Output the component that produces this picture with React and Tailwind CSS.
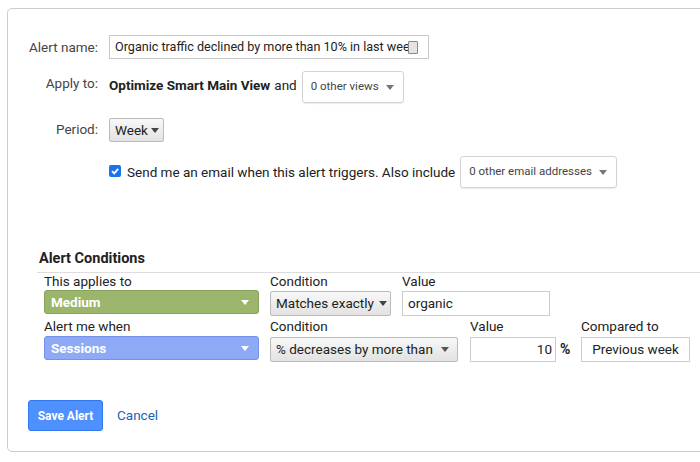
import React from "react";

function Caret({ color = "#555" }) {
  return (
    <svg width="8" height="5" viewBox="0 0 8 5" className="shrink-0">
      <path d="M0 0 L8 0 L4 5 Z" fill={color} />
    </svg>
  );
}

export default function App() {
  return (
    <div className="w-[700px] h-[462px] overflow-hidden bg-white font-['Roboto',_'Liberation_Sans',_sans-serif] text-[13.5px] text-[#222]">
      <div className="ml-[7px] mt-[8px] w-[720px] h-[444px] border border-[#ccc] rounded-[5px] pt-[26px] relative">
        {/* Alert name */}
        <div className="flex items-center">
          <div className="w-[90px] text-right text-[#444]">Alert name:</div>
          <div className="ml-[11px] w-[320px] h-[24px] border border-[#c8c8c8] flex items-center pl-[5px] relative overflow-hidden">
            <span className="whitespace-nowrap text-[12.6px]">Organic traffic declined by more than 10% in last week</span>
            <span className="absolute right-[10px] top-[5px] w-[10px] h-[13px] border border-[#888] bg-[#e4e4e4] rounded-[1px]"></span>
          </div>
        </div>
        {/* Apply to */}
        <div className="flex items-center mt-[12px]">
          <div className="w-[90px] text-right text-[#444] -mt-[7px]">Apply to:</div>
          <div className="ml-[11px] flex items-center -mt-[4px]">
            <span className="font-bold">Optimize Smart Main View</span>
            <span className="ml-[4px]">and</span>
          </div>
          <div className="ml-[5px] w-[102px] h-[32px] border border-[#d4d4d4] rounded-[3px] flex items-center justify-between pl-[8px] pr-[9px] text-[11.5px] text-[#444] shadow-[0_1px_1px_rgba(0,0,0,0.08)]">
            <span>0 other views</span>
            <Caret color="#777" />
          </div>
        </div>
        {/* Period */}
        <div className="flex items-center mt-[15px]">
          <div className="w-[90px] text-right text-[#444] -mt-[2px]">Period:</div>
          <div className="ml-[11px] w-[55px] h-[24px] border border-[#bbb] rounded-[2px] bg-gradient-to-b from-[#f8f8f8] to-[#e2e2e2] flex items-center pl-[5px] gap-[3px] text-[#222]">
            <span>Week</span>
            <Caret color="#444" />
          </div>
        </div>
        {/* Email */}
        <div className="flex items-center mt-[14px] pl-[101px]">
          <span className="w-[12px] h-[12px] rounded-[2px] bg-[#1a73e8] flex items-center justify-center -mt-[3px]">
            <svg width="10" height="10" viewBox="0 0 10 10">
              <path d="M2 5.2 L4.2 7.4 L8.2 2.8" stroke="white" strokeWidth="1.8" fill="none" />
            </svg>
          </span>
          <span className="ml-[6px]">Send me an email when this alert triggers. Also include</span>
          <div className="ml-[5px] w-[157px] h-[32px] border border-[#d4d4d4] rounded-[3px] flex items-center justify-between pl-[8px] pr-[9px] text-[11.5px] text-[#444] shadow-[0_1px_1px_rgba(0,0,0,0.08)]">
            <span>0 other email addresses</span>
            <Caret color="#777" />
          </div>
        </div>

        {/* Alert Conditions */}
        <div className="mt-[62px] ml-[31px] text-[14.5px] font-bold text-[#222] leading-[18px]">Alert Conditions</div>
        <div className="ml-[29px] mt-[4px] h-px bg-[#ddd]"></div>

        {/* Row 1 */}
        <div className="flex ml-[36px]">
          <div className="w-[215px]">
            <div className="leading-[16px]">This applies to</div>
            <div className="mt-[1px] h-[24px] rounded-[3px] bg-[#9bb56d] border border-[#86a25a] flex items-center justify-between pl-[6px] pr-[9px] text-white font-bold">
              <span>Medium</span>
              <Caret color="#fff" />
            </div>
          </div>
          <div className="ml-[11px] w-[121px]">
            <div className="leading-[16px]">Condition</div>
            <div className="mt-[2px] h-[25px] border border-[#bbb] rounded-[2px] bg-gradient-to-b from-[#f8f8f8] to-[#e2e2e2] flex items-center pl-[5px] gap-[5px]">
              <span>Matches exactly</span>
              <Caret color="#444" />
            </div>
          </div>
          <div className="ml-[11px] w-[148px]">
            <div className="leading-[16px]">Value</div>
            <div className="mt-[2px] h-[25px] border border-[#ccc] flex items-center pl-[5px]">organic</div>
          </div>
        </div>

        {/* Row 2 */}
        <div className="flex ml-[36px] mt-[2px]">
          <div className="w-[215px]">
            <div className="leading-[16px]">Alert me when</div>
            <div className="mt-[2px] h-[24px] rounded-[3px] bg-[#8eaaf6] border border-[#7592e6] flex items-center justify-between pl-[6px] pr-[9px] text-white font-bold">
              <span>Sessions</span>
              <Caret color="#fff" />
            </div>
          </div>
          <div className="ml-[11px] w-[188px]">
            <div className="leading-[16px]">Condition</div>
            <div className="mt-[3px] h-[25px] border border-[#bbb] rounded-[2px] bg-gradient-to-b from-[#f8f8f8] to-[#e2e2e2] flex items-center justify-between pl-[5px] pr-[8px]">
              <span>% decreases by more than</span>
              <Caret color="#555" />
            </div>
          </div>
          <div className="ml-[12px] w-[86px]">
            <div className="leading-[16px]">Value</div>
            <div className="mt-[3px] h-[25px] border border-[#ccc] flex items-center justify-end pr-[3px]">10</div>
          </div>
          <div className="ml-[4px] w-[20px] flex flex-col">
            <div className="h-[16px]"></div>
            <div className="mt-[3px] h-[25px] flex items-center font-bold text-[14px]">%</div>
          </div>
          <div className="ml-[1px] w-[109px]">
            <div className="leading-[16px]">Compared to</div>
            <div className="mt-[3px] h-[25px] border border-[#ccc] flex items-center justify-center">Previous week</div>
          </div>
        </div>

        {/* Buttons */}
        <div className="flex items-center ml-[20px] mt-[38px]">
          <div className="w-[75px] h-[31px] rounded-[3px] bg-[#4d90fe] border border-[#3079ed] text-white font-bold text-[12px] flex items-center justify-center">Save Alert</div>
          <div className="ml-[14px] text-[#1a62b3]">Cancel</div>
        </div>
      </div>
    </div>
  );
}
